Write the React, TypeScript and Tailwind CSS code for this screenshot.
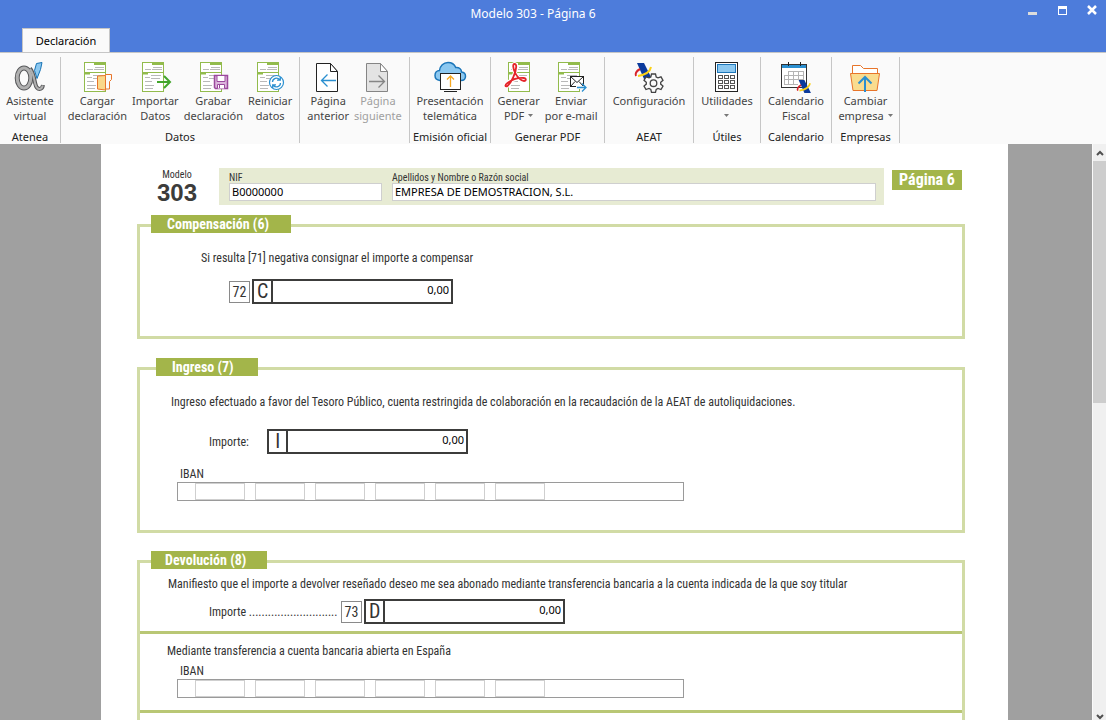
// App.tsx
import type { ReactNode } from 'react';

const FORM_FONT = "font-['Roboto_Condensed',Roboto,sans-serif]";

/* ---------- Iconos ---------- */

function Icon({ children }: { children: ReactNode }) {
  return (
    <svg width="32" height="32" viewBox="0 0 32 32" fill="none" className="shrink-0 overflow-visible" aria-hidden="true">
      {children}
    </svg>
  );
}

// Hoja verde que comparten casi todos los botones
function FormSheet({ x = 0 }: { x?: number }) {
  return (
    <g transform={`translate(${x} 0)`}>
      <rect x="3.5" y="1.5" width="21" height="29" fill="#fff" stroke="#92bb4c" />
      <path d="M13 1h12v3H13zM3 11h6v2.5H3z" fill="#92bb4c" />
      <path d="M3 11.5h22" stroke="#92bb4c" />
      <path d="M14 6.500h9M6 8.500h6M13 8.500h10M12 14.500h10M6 16.500h5M12 17.500h9M6 20.500h7M6 24.500h9M6 27.500h8" stroke="#b9b9b9" />
    </g>
  );
}

// Logotipo de la Agencia Tributaria, 17x16
function AeatLogo() {
  return (
    <g>
      <path d="M2 0h7l8 16h-8z" fill="#0b3a9c" />
      <path d="M5 6C1 8 0 11 1 13" stroke="#d8232a" strokeWidth="2" />
      <path d="M16 4c-1 5-7 8-13 9" stroke="#fbd116" strokeWidth="2" />
    </g>
  );
}

const AlphaIcon = () => (
  <Icon>
    <path d="M16 7.500c3 3 4 9 5 14 1 5 2.500 6.500 4.500 6.500s3-1 3.500-4" stroke="#58595b" strokeWidth="4" />
    <ellipse cx="10" cy="17" rx="6.800" ry="10" stroke="#58595b" strokeWidth="5" />
    <path d="M16 8c3 3 4 9 5 14 1 4.500 2.500 6 4.500 6 1.800 0 2.700-1 3.300-3.500" stroke="#b0b0b0" strokeWidth="2" />
    <ellipse cx="10" cy="17" rx="6.800" ry="10" stroke="#b0b0b0" strokeWidth="3" />
    <path d="M22.500 2.500l5.500-1-1.500 7-3.500 9-2.500-8z" fill="#8cc8f0" stroke="#1673b5" />
  </Icon>
);

const LoadIcon = () => (
  <Icon>
    <FormSheet />
    <path d="M24 14l1-.5h5.500v5l-2 2V28h-4z" fill="#fafafa" stroke="#e8752a" />
    <path d="M16.500 15l8-.5V29l-8-1z" fill="#f9d88a" stroke="#e8752a" />
  </Icon>
);

const ImportIcon = () => (
  <Icon>
    <FormSheet />
    <path d="M18 21h13M25 15l6 6-6 6" stroke="#43a52c" strokeWidth="2" />
  </Icon>
);

const SaveIcon = () => (
  <Icon>
    <FormSheet />
    <path d="M17.500 14.500h13v13h-12l-1-1z" fill="#dcb6dc" stroke="#9b4a9d" strokeWidth="1.500" />
    <path d="M20 14.500h8v6h-8z" fill="#fff" stroke="#9b4a9d" />
    <path d="M20.500 27.500v-4h7v4M22.500 24v3" fill="#fff" stroke="#9b4a9d" />
  </Icon>
);

const ResetIcon = () => (
  <Icon>
    <FormSheet />
    <circle cx="22.500" cy="21.500" r="7" fill="#fff" stroke="#2a8fd0" strokeWidth="1.200" />
    <path d="M18.500 21a4 4 0 0 1 7-2.500M26.500 22a4 4 0 0 1-7 2.500M26.300 16v3.200H23M18.700 27v-3.200H22" stroke="#2a8fd0" strokeWidth="1.300" />
  </Icon>
);

function PageIcon({ back, disabled }: { back?: boolean; disabled?: boolean }) {
  const line = disabled ? '#858585' : '#222';
  return (
    <Icon>
      <path d="M4.500 2.500h14l7 8v20h-21z" fill={disabled ? '#e3e3e3' : '#fff'} stroke={line} />
      <path d="M18.500 2.500v8h7z" fill="#fff" stroke={line} />
      {back ? (
        <path d="M24 19.500H9.500M15.500 13.500l-6 6 6 6" stroke="#2a8fd0" strokeWidth="1.300" />
      ) : (
        <path d="M7 20.500h15M16.500 14.500l6 6-6 6" stroke={line} strokeWidth="1.300" />
      )}
    </Icon>
  );
}

const CloudIcon = () => (
  <Icon>
    <path d="M6 19.500C2.500 19 1 17 1 14.500c0-3 2-5 4.500-5C6 5 9.500 1.500 14 1.500c3.500 0 6.500 2 7.700 5 3.300-.5 5.800 1.700 5.800 4.500 2.300.3 4 2 4 4.200 0 2.500-1.500 4.300-4.500 4.300z" fill="#8cc8f0" stroke="#1c76b9" strokeWidth="1.500" />
    <rect x="6.500" y="12.500" width="20" height="16" fill="#fff" stroke="#222" />
    <path d="M10 30.500h13" stroke="#222" />
    <path d="M16.500 26V15M13 18.500l3.500-3.500 3.500 3.500" stroke="#f6a821" strokeWidth="1.300" />
  </Icon>
);

const ACROBAT = 'M11.500 3c-2 0-1.500 4 .5 8.500 2 4.500 6 8.500 9 8.500 2.500 0 2.500-2.800-.5-3-5.500-.3-12 2-16 5-3.500 2.600-2 4.500.2 2.700C8.500 21.500 13 11.500 13.200 6c.1-2-.6-3-1.700-3z';

const PdfIcon = () => (
  <Icon>
    <FormSheet x={2} />
    <path d={ACROBAT} stroke="#fff" strokeWidth="4" />
    <path d={ACROBAT} stroke="#e5252a" strokeWidth="1.800" />
  </Icon>
);

const MailIcon = () => (
  <Icon>
    <FormSheet />
    <rect x="15.500" y="15.500" width="13" height="10" fill="#fff" stroke="#222" />
    <path d="M15.500 15.500l6.500 6 6.500-6M15.500 25.500l4.500-5M28.500 25.500L24 20.500" stroke="#222" />
    <path d="M21 26.500h10" stroke="#fafafa" strokeWidth="3" />
    <path d="M22 26.500h9M27 22.500l4 4-4 4" stroke="#2a8fd0" strokeWidth="1.300" />
  </Icon>
);

const GEAR = 'M18.500 13h4l.7 3 1.800.9 3-1 2 3.400-2.300 2v1.800l2.300 2-2 3.400-3-1-1.800.9-.7 3h-4l-.7-3-1.800-.9-3 1-2-3.400 2.300-2v-1.800l-2.300-2 2-3.400 3 1 1.800-.9z';

const SettingsIcon = () => (
  <Icon>
    <g transform="translate(2 2)">
      <AeatLogo />
    </g>
    <path d={GEAR} fill="#fafafa" stroke="#444" strokeWidth="1.300" />
    <circle cx="20.500" cy="22.200" r="3.300" fill="#fafafa" stroke="#444" strokeWidth="1.300" />
  </Icon>
);

const CalculatorIcon = () => (
  <Icon>
    <rect x="4.500" y="1.500" width="22" height="29" fill="#fff" stroke="#222" />
    <rect x="6.500" y="3.500" width="18" height="8" fill="#8cc8f0" stroke="#1c76b9" />
    {[14.5, 19.5, 24.5].map((y) =>
      [7.5, 13.5, 19.5].map((x) => <rect key={`${x}-${y}`} x={x} y={y} width="4" height="3" stroke="#555" />)
    )}
  </Icon>
);

const CalendarIcon = () => (
  <Icon>
    <rect x="1.500" y="3.500" width="25" height="23" fill="#fff" stroke="#333" />
    <path d="M2 4h24v3H2z" fill="#2a8fd0" />
    <path d="M8.500 1v4M20.500 1v4" stroke="#222" />
    <path d="M8 10.500h15.500M4 14.500h20M4 18.500h20M4 23.500h14M8.500 10v14M13.500 10v14M18.500 10v9M23.500 10v9M4.500 14v10" stroke="#b4b4b4" />
    <g transform="translate(17 19) scale(.82)">
      <AeatLogo />
    </g>
  </Icon>
);

const CompanyIcon = () => (
  <Icon>
    <path d="M3.500 13V4.500h8l3 3h14V13" fill="#fff" stroke="#e8752a" />
    <path d="M1.500 12.500h29l-2.500 17H4z" fill="#f9dc8f" stroke="#e8752a" />
    <path d="M16 31V16M9.500 22.500l6.500-6.500 6.500 6.500" stroke="#2a8fd0" strokeWidth="2" />
  </Icon>
);

/* ---------- Cinta de opciones ---------- */

interface RibbonAction {
  lines: string[];
  icon: ReactNode;
  menu?: boolean;
  disabled?: boolean;
}

interface RibbonGroup {
  title: string;
  width: string;
  actions: RibbonAction[];
}

const groups: RibbonGroup[] = [
  { title: 'Atenea', width: 'w-[61px]', actions: [{ lines: ['Asistente', 'virtual'], icon: <AlphaIcon /> }] },
  {
    title: 'Datos',
    width: 'w-[239px]',
    actions: [
      { lines: ['Cargar', 'declaración'], icon: <LoadIcon /> },
      { lines: ['Importar', 'Datos'], icon: <ImportIcon /> },
      { lines: ['Grabar', 'declaración'], icon: <SaveIcon /> },
      { lines: ['Reiniciar', 'datos'], icon: <ResetIcon /> },
    ],
  },
  {
    title: '',
    width: 'w-[110px]',
    actions: [
      { lines: ['Página', 'anterior'], icon: <PageIcon back /> },
      { lines: ['Página', 'siguiente'], icon: <PageIcon disabled />, disabled: true },
    ],
  },
  { title: 'Emisión oficial', width: 'w-[81px]', actions: [{ lines: ['Presentación', 'telemática'], icon: <CloudIcon /> }] },
  {
    title: 'Generar PDF',
    width: 'w-[114px]',
    actions: [
      { lines: ['Generar', 'PDF'], icon: <PdfIcon />, menu: true },
      { lines: ['Enviar', 'por e-mail'], icon: <MailIcon /> },
    ],
  },
  { title: 'AEAT', width: 'w-[89px]', actions: [{ lines: ['Configuración', ''], icon: <SettingsIcon /> }] },
  { title: 'Útiles', width: 'w-[67px]', actions: [{ lines: ['Utilidades', ''], icon: <CalculatorIcon />, menu: true }] },
  { title: 'Calendario', width: 'w-[71px]', actions: [{ lines: ['Calendario', 'Fiscal'], icon: <CalendarIcon /> }] },
  { title: 'Empresas', width: 'w-[68px]', actions: [{ lines: ['Cambiar', 'empresa'], icon: <CompanyIcon />, menu: true }] },
];

function Ribbon() {
  return (
    <div className="flex shrink-0 overflow-hidden border-t border-[#c6c6c6] bg-[#fafafa] pt-1">
      {groups.map((group, i) => (
        <div key={i} className={`${group.width} mb-px flex shrink-0 flex-col items-center border-r border-[#c6c6c6] pt-1`}>
          <div className="flex h-[70px] gap-[5px]">
            {group.actions.map((action) => (
              <button
                key={action.lines.join(' ')}
                type="button"
                disabled={action.disabled}
                className="flex flex-col items-center whitespace-nowrap leading-[15px] text-[#444] disabled:text-[#a0a0a0]"
              >
                {action.icon}
                <span>{action.lines[0]}</span>
                <span className="flex h-[15px] items-center gap-1">
                  {action.lines[1] && <span>{action.lines[1]}</span>}
                  {action.menu && (
                    <svg width="5" height="3" viewBox="0 0 5 3" aria-hidden="true">
                      <path d="M0 0h5L2.500 3z" fill="#777" />
                    </svg>
                  )}
                </span>
              </button>
            ))}
          </div>
          <div className="h-3 whitespace-nowrap leading-3 text-[#222]">{group.title}</div>
        </div>
      ))}
    </div>
  );
}

/* ---------- Formulario ---------- */

function SectionTitle({ className, children }: { className: string; children: ReactNode }) {
  return (
    <h2 className={`${className} -mt-3 h-[18px] bg-[#a3b54a] text-sm font-bold leading-[18px] text-white`}>{children}</h2>
  );
}

function BoxNumber({ children }: { children: ReactNode }) {
  return (
    <span className="mr-0.5 flex h-[22px] w-[21px] items-center justify-center border border-[#8a8a8a] text-sm text-[#333]">
      {children}
    </span>
  );
}

function AmountBox({ code, label }: { code: string; label: string }) {
  return (
    <label className="flex h-[25px] w-[201px] border-2 border-[#3c3c3b]">
      <span className="w-[19px] text-center text-xl leading-[21px] text-[#333]">{code}</span>
      <input
        aria-label={label}
        defaultValue="0,00"
        className="w-full min-w-0 border-l-2 border-[#3c3c3b] bg-white pb-1 pr-0.5 text-right font-['Noto_Sans',sans-serif] text-[11px] text-black outline-none"
      />
    </label>
  );
}

function IbanBox({ id }: { id: string }) {
  return (
    <fieldset className="ml-[37px]">
      <legend className="ml-[3px] h-[15px] leading-[15px]">IBAN</legend>
      <div className="flex h-[19px] w-[507px] gap-2.5 border border-[#9a9a9a] pl-[17px]">
        {[1, 2, 3, 4, 5, 6].map((n) => (
          <input key={n} id={`${id}-${n}`} aria-label={`IBAN bloque ${n}`} className="w-[50px] border border-[#cfcfcf] outline-none" />
        ))}
      </div>
    </fieldset>
  );
}

function FormHeader() {
  return (
    <header className="flex items-start">
      <div className="ml-[19px] w-[42px] text-center">
        <div className="text-[10px] leading-[14px]">Modelo</div>
        <div className="font-['Liberation_Sans',sans-serif] text-2xl font-bold leading-[22px] text-[#3c3c3b]">303</div>
      </div>
      <div className="ml-[21px] flex min-w-0 flex-1 gap-2.5 bg-[#e7ebd3] pb-1 pl-2.5 pr-2 pt-1">
        <div className="w-[153px]">
          <label htmlFor="nif" className="block text-[10px] leading-[11px]">NIF</label>
          <input
            id="nif"
            defaultValue="B0000000"
            className="block h-[18px] w-full border border-[#cfcfcf] bg-white px-0.5 font-['Noto_Sans',sans-serif] text-[11px] text-black outline-none"
          />
        </div>
        <div className="min-w-0 flex-1">
          <label htmlFor="nombre" className="block text-[10px] leading-[11px]">Apellidos y Nombre o Razón social</label>
          <input
            id="nombre"
            defaultValue="EMPRESA DE DEMOSTRACION, S.L."
            className="block h-[18px] w-full border border-[#cfcfcf] bg-white px-0.5 font-['Noto_Sans',sans-serif] text-[11px] text-black outline-none"
          />
        </div>
      </div>
      <div className="ml-2 mr-[3px] mt-0.5 w-[70px] bg-[#a3b54a] text-center text-base font-bold leading-5 text-white">Página 6</div>
    </header>
  );
}

function Modelo303() {
  return (
    <main className={`${FORM_FONT} ml-[101px] mr-[84px] min-w-0 flex-1 overflow-hidden bg-white pl-9 pr-[43px] pt-6 text-xs leading-5 text-[#333]`}>
      <FormHeader />

      <section className="mt-[19px] border-[3px] border-[#d1dba5] pb-[32px]">
        <SectionTitle className="ml-[11px] w-[140px] pl-4">Compensación (6)</SectionTitle>
        <p className="ml-[61px] mt-[15px]">Si resulta [71] negativa consignar el importe a compensar</p>
        <div className="ml-[89px] mt-[11px] flex items-center">
          <BoxNumber>72</BoxNumber>
          <AmountBox code="C" label="Importe a compensar" />
        </div>
      </section>

      <section className="mt-7 border-[3px] border-[#d1dba5] pb-[29px]">
        <SectionTitle className="ml-4 w-[102px] pl-4">Ingreso (7)</SectionTitle>
        <p className="ml-[31px] mt-4">
          Ingreso efectuado a favor del Tesoro Público, cuenta restringida de colaboración en la recaudación de la AEAT de autoliquidaciones.
        </p>
        <div className="mb-[13px] ml-[69px] mt-[17px] flex items-center">
          <span className="w-[58px]">Importe:</span>
          <AmountBox code="I" label="Importe del ingreso" />
        </div>
        <IbanBox id="ingreso" />
      </section>

      <section className="mt-[27px] border-[3px] border-[#d1dba5] pb-10">
        <SectionTitle className="ml-[11px] w-[116px] pl-3.5">Devolución (8)</SectionTitle>
        <p className="ml-7 mt-[5px]">
          Manifiesto que el importe a devolver reseñado deseo me sea abonado mediante transferencia bancaria a la cuenta indicada de la que soy titular
        </p>
        <div className="ml-[69px] mt-[5px] flex items-center">
          <span className="w-[132px] whitespace-nowrap">Importe ............................</span>
          <BoxNumber>73</BoxNumber>
          <AmountBox code="D" label="Importe a devolver" />
        </div>
        <div className="mt-[7px] border-t-[3px] border-[#b9c775] pb-3 pt-[7px]">
          <p className="mb-[3px] ml-[27px]">Mediante transferencia a cuenta bancaria abierta en España</p>
          <IbanBox id="devolucion" />
        </div>
        <div className="border-t-[3px] border-[#b9c775]" />
      </section>
    </main>
  );
}

function ScrollBar() {
  return (
    <div className="flex w-[14px] shrink-0 flex-col border-l border-[#fafafa] bg-[#f0f0f0]">
      <button type="button" aria-label="Subir" className="flex h-[17px] items-center justify-center">
        <svg width="8" height="6" viewBox="0 0 8 6" fill="none"><path d="M1 5l3-3 3 3" stroke="#505050" strokeWidth="2" /></svg>
      </button>
      <div className="h-[42%] bg-[#cdcdcd]" />
      <button type="button" aria-label="Bajar" className="mt-auto flex h-[17px] items-end justify-center">
        <svg width="8" height="6" viewBox="0 0 8 6" fill="none"><path d="M1 1l3 3 3-3" stroke="#505050" strokeWidth="2" /></svg>
      </button>
    </div>
  );
}

export default function App() {
  return (
    <div className="flex h-screen flex-col overflow-hidden bg-[#a0a0a0] font-['Noto_Sans',sans-serif] text-[11px]">
      <div className="flex shrink-0 flex-col bg-[#4d7cdb]">
        <div className="flex h-7 items-start">
          <h1 className="flex-1 pl-[56px] text-center text-xs leading-7 text-white">Modelo 303 - Página 6</h1>
          <div className="flex w-[96px] items-start pt-[5px]">
            <button type="button" aria-label="Minimizar" className="ml-[18px] mr-[21px] mt-[7px] h-[3px] w-[9px] bg-[#dcdcdc]" />
            <button type="button" aria-label="Maximizar" className="mr-5 mt-px h-[9px] w-[9px] border border-t-[3px] border-white" />
            <button type="button" aria-label="Cerrar">
              <svg width="10" height="10" viewBox="0 0 10 10"><path d="M1 1l8 8M9 1L1 9" stroke="#fff" strokeWidth="2.500" /></svg>
            </button>
          </div>
        </div>
        <nav className="flex pl-[22px]">
          <button type="button" className="-mb-px h-[25px] w-[88px] border border-b-0 border-[#c6c6c6] bg-[#fafafa] text-black">Declaración</button>
        </nav>
      </div>
      <Ribbon />
      <div className="flex min-h-0 flex-1">
        <Modelo303 />
        <ScrollBar />
      </div>
    </div>
  );
}
